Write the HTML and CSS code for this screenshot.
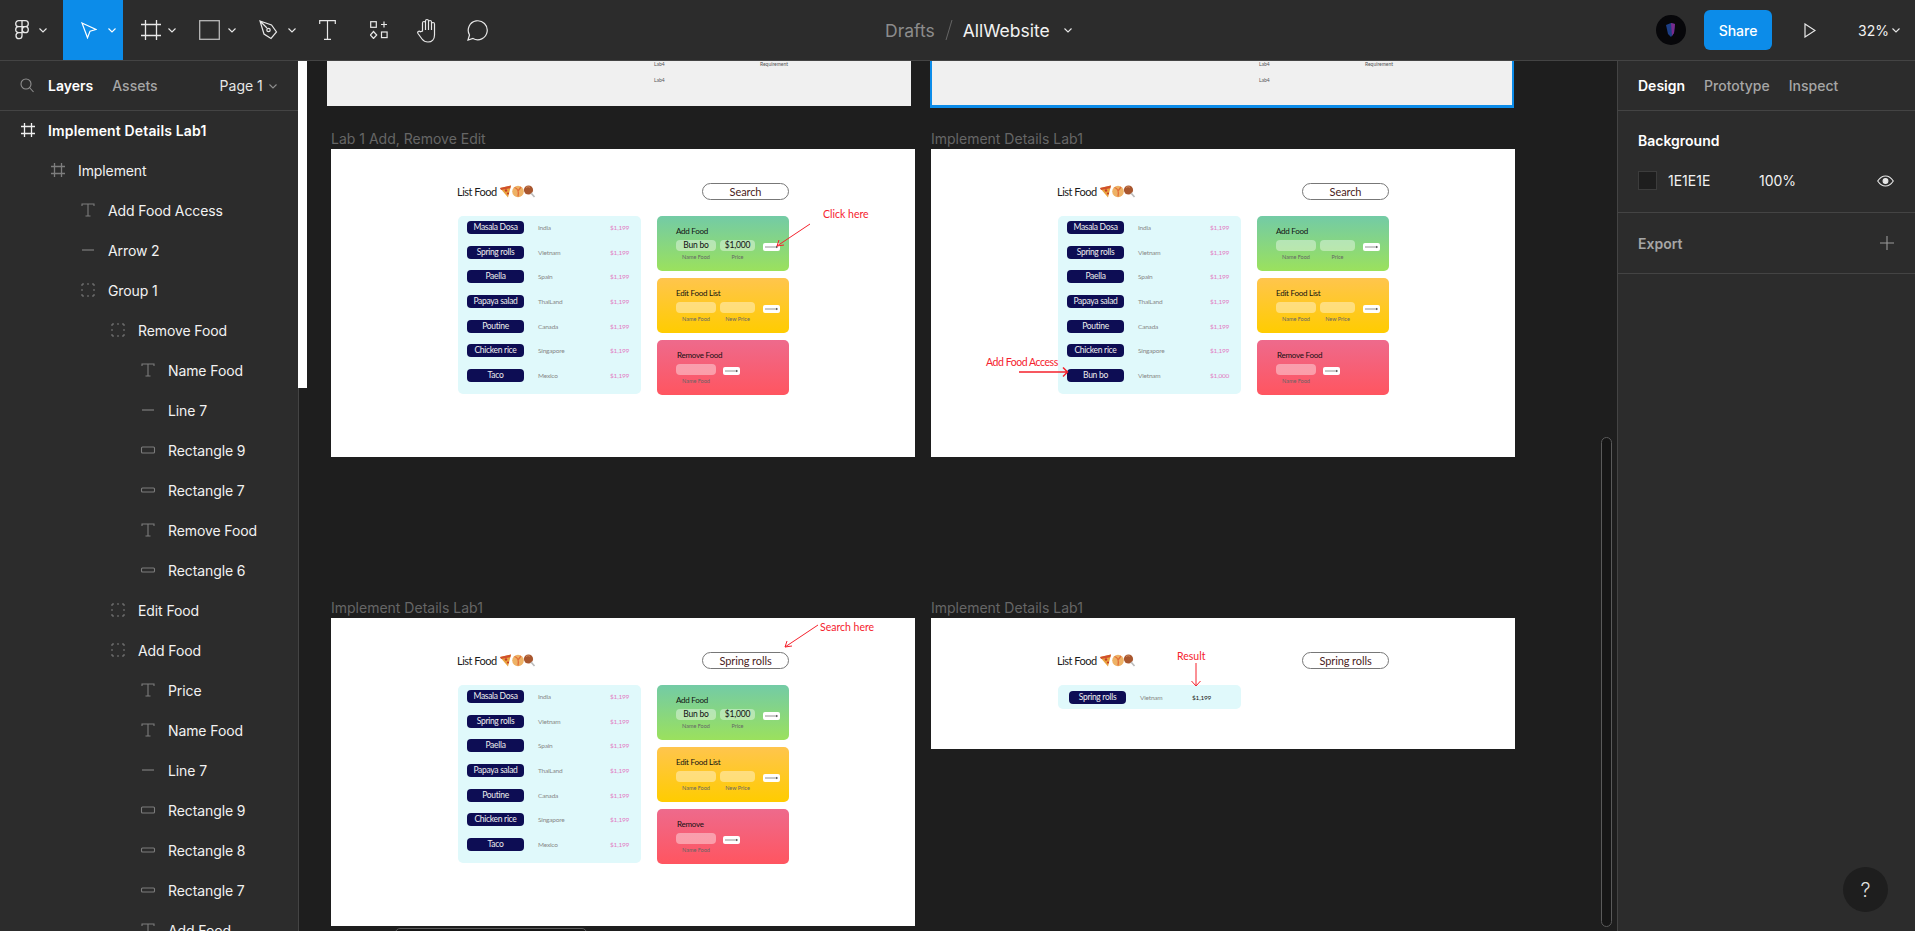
FILE: index.html
```html
<!DOCTYPE html>
<html lang="en">
  <head>
    <meta charset="UTF-8" />
    <title>AllWebsite - Figma</title>
    <link rel="stylesheet" href="styles.css">
  </head>
  <body>
    <svg class="iconDefs" width="0" height="0">
      <symbol id="iFrame" viewBox="0 0 16 16"><path d="M4.5 1v14M11.5 1v14M1 4.5h14M1 11.5h14" fill="none" stroke="currentColor" stroke-width="1.3"/></symbol>
      <symbol id="iText" viewBox="0 0 16 16"><path d="M2 4V2h12v2M8 2v12M5.5 14h5" fill="none" stroke="currentColor" stroke-width="1.1"/></symbol>
      <symbol id="iLine" viewBox="0 0 16 16"><path d="M2 8h12" stroke="currentColor" stroke-width="1.2"/></symbol>
      <symbol id="iGroup" viewBox="0 0 16 16"><path d="M2 2h2M7 2h2M12 2h2M2 14h2M7 14h2M12 14h2M2 2v2M2 7v2M2 12v2M14 2v2M14 7v2M14 12v2" fill="none" stroke="currentColor" stroke-width="1"/></symbol>
      <symbol id="iRect" viewBox="0 0 16 16"><rect x="1.5" y="5" width="13" height="6" rx="1" fill="none" stroke="currentColor" stroke-width="1.1"/></symbol>
      <symbol id="iRectThin" viewBox="0 0 16 16"><rect x="1.5" y="6" width="13" height="4" rx="1" fill="none" stroke="currentColor" stroke-width="1.1"/></symbol>
      <symbol id="iChevron" viewBox="0 0 10 10"><path d="M1.5 3.5 5 7l3.5-3.5" fill="none" stroke="currentColor" stroke-width="1.1"/></symbol>
      <symbol id="iGo" viewBox="0 0 17 8"><path d="M2 4h12.500" stroke="#777" stroke-width=".8"/><path d="M13 2.700 15 4l-2 1.300z" fill="#555"/></symbol>
      <symbol id="iFood" viewBox="0 0 36 13">
        <path d="M0 3 11 0.500 8 12.500z" fill="#e8a33c"/>
        <path d="M0 3 11 0.500 10.300 3.200 1 5z" fill="#d0502c"/>
        <circle cx="6" cy="5.500" r="1.200" fill="#c8392b"/>
        <circle cx="8" cy="8.500" r="1.100" fill="#c8392b"/>
        <circle cx="18" cy="6.500" r="5.800" fill="#eeb266"/>
        <path d="M14.500 2.500c3.500 1 4.500 4.500 3.500 9M21 2l-3 4" fill="none" stroke="#e2703a" stroke-width="1.300"/>
        <circle cx="28.500" cy="5" r="4.600" fill="#a8562e"/>
        <path d="M26 2.500c1.500-1 3-1 4 0" fill="none" stroke="#d28a5c"/>
        <path d="M31 8l3.500 4" stroke="#bbb" stroke-width="1.700"/>
      </symbol>
    </svg>

    <div class="topbar">
      <div class="tools">
        <div class="tool toolMain">
          <svg class="toolIcon" width="14" height="20" viewBox="0 0 14 20" fill="none" stroke="#e8e8e8" stroke-width="1.300"><path d="M7 .7H3.700a3 3 0 0 0 0 6H7zM7 .7h3.300a3 3 0 0 1 0 6H7zM7 6.700H3.700a3 3 0 0 0 0 6H7zM7 12.700H3.700A3 3 0 1 0 7 15.700zM13.300 9.700a3 3 0 1 1-6 0 3 3 0 0 1 6 0z"/></svg>
          <svg class="chev"><use href="#iChevron"/></svg>
        </div>
        <div class="tool toolMove">
          <svg class="toolIcon" width="16" height="17" viewBox="0 0 16 17" fill="none" stroke="#fff" stroke-width="1.200"><path d="M1 1l14 6.500-6 1.800-2.500 6.500z"/></svg>
          <svg class="chev"><use href="#iChevron"/></svg>
        </div>
        <div class="tool toolFrame">
          <svg class="toolIcon" width="20" height="20" viewBox="0 0 20 20" fill="none" stroke="#e8e8e8" stroke-width="1.300"><path d="M4.500 0v20M15.500 0v20M0 4.500h20M0 15.500h20"/></svg>
          <svg class="chev"><use href="#iChevron"/></svg>
        </div>
        <div class="tool toolRect">
          <svg class="toolIcon" width="21" height="20" viewBox="0 0 21 20" fill="none" stroke="#b8b8b8" stroke-width="1.300"><rect x=".7" y=".7" width="19.600" height="18.600"/></svg>
          <svg class="chev"><use href="#iChevron"/></svg>
        </div>
        <div class="tool toolPen">
          <svg class="toolIcon" width="20" height="20" viewBox="0 0 20 20" fill="none" stroke="#e8e8e8" stroke-width="1.200"><path d="M1 1l11.500 4 5 7-5.500 6.500-7-4.500zM1 1l7 7"/><circle cx="9.500" cy="10" r="1.700"/></svg>
          <svg class="chev"><use href="#iChevron"/></svg>
        </div>
        <svg class="toolSolo toolText" width="17" height="20" viewBox="0 0 17 20" fill="none" stroke="#e8e8e8" stroke-width="1.200"><path d="M.7 4V.7h15.600V4M8.500.7v18.600M5 19.300h7"/></svg>
        <svg class="toolSolo toolWidgets" width="18" height="18" viewBox="0 0 18 18" fill="none" stroke="#e8e8e8" stroke-width="1.200"><rect x=".7" y=".7" width="5.600" height="5.600"/><path d="M14 .5v6M11 3.500h6"/><path d="M3.500 10.500l3.200 3.500-3.200 3.500L.3 14z"/><rect x="11.500" y="11" width="5.600" height="5.600"/></svg>
        <svg class="toolSolo toolHand" width="22" height="25" viewBox="0 0 22 25" fill="none" stroke="#e8e8e8" stroke-width="1.200"><path d="M5.500 13V5a1.500 1.500 0 0 1 3 0V3a1.500 1.500 0 0 1 3 0v1a1.500 1.500 0 0 1 3 0v2a1.500 1.500 0 0 1 3 0v11c0 4-2.500 7-6.500 7-3 0-4.500-1-6-3L1 15.500c-1-1.500 1-3 2.300-1.800zM8.500 5v7M11.500 3v9M14.500 4v8"/></svg>
        <svg class="toolSolo toolComment" width="22" height="21" viewBox="0 0 22 21" fill="none" stroke="#e8e8e8" stroke-width="1.200"><path d="M1 20l1.500-5A9.500 9.500 0 1 1 6 18.500z"/></svg>
      </div>
      <div class="fileTitle">
        <span class="fileFolder">Drafts</span>
        <svg class="fileSlash" width="8" height="20" viewBox="0 0 8 20"><path d="M7 0 1 20" stroke="#666" stroke-width="1"/></svg>
        <span class="fileName">AllWebsite</span>
        <svg class="chev"><use href="#iChevron"/></svg>
      </div>
      <div class="topRight">
        <svg class="avatar" width="30" height="30" viewBox="0 0 30 30"><circle cx="15" cy="15" r="15" fill="#07070a"/><path d="M10 10l5-2 4 1-1 9-3 4-3-3z" fill="#1d3f86"/><path d="M15 8l4 1-1 9-2 3z" fill="#7a2a8c"/></svg>
        <div class="shareBtn">Share</div>
        <svg class="playIcon" width="12" height="15" viewBox="0 0 12 15" fill="none" stroke="#e8e8e8" stroke-width="1.200"><path d="M1 1l10 6.500L1 14z"/></svg>
        <span class="zoomValue">32%</span>
        <svg class="chev"><use href="#iChevron"/></svg>
      </div>
    </div>

    <div class="workspace">
      <div class="leftPanel">
        <div class="panelTabs">
          <svg class="searchIcon" width="14" height="15" viewBox="0 0 14 15" fill="none" stroke="#8f8f8f" stroke-width="1.100"><circle cx="6" cy="6" r="5"/><path d="M9.500 9.500 13.500 14"/></svg>
          <span class="tabOn">Layers</span>
          <span class="tabOff">Assets</span>
          <span class="pageName">Page 1</span>
          <svg class="chev chevDim"><use href="#iChevron"/></svg>
        </div>
        <div class="layerList">
          <div class="layer d0 layerTop"><svg class="layerIcon"><use href="#iFrame"/></svg>Implement Details Lab1</div>
          <div class="layer d1"><svg class="layerIcon iconDim"><use href="#iFrame"/></svg>Implement</div>
          <div class="layer d2"><svg class="layerIcon iconDim"><use href="#iText"/></svg>Add Food Access</div>
          <div class="layer d2"><svg class="layerIcon iconDim"><use href="#iLine"/></svg>Arrow 2</div>
          <div class="layer d2"><svg class="layerIcon iconDim"><use href="#iGroup"/></svg>Group 1</div>
          <div class="layer d3"><svg class="layerIcon iconDim"><use href="#iGroup"/></svg>Remove Food</div>
          <div class="layer d4"><svg class="layerIcon iconDim"><use href="#iText"/></svg>Name Food</div>
          <div class="layer d4"><svg class="layerIcon iconDim"><use href="#iLine"/></svg>Line 7</div>
          <div class="layer d4"><svg class="layerIcon iconDim"><use href="#iRect"/></svg>Rectangle 9</div>
          <div class="layer d4"><svg class="layerIcon iconDim"><use href="#iRectThin"/></svg>Rectangle 7</div>
          <div class="layer d4"><svg class="layerIcon iconDim"><use href="#iText"/></svg>Remove Food</div>
          <div class="layer d4"><svg class="layerIcon iconDim"><use href="#iRectThin"/></svg>Rectangle 6</div>
          <div class="layer d3"><svg class="layerIcon iconDim"><use href="#iGroup"/></svg>Edit Food</div>
          <div class="layer d3"><svg class="layerIcon iconDim"><use href="#iGroup"/></svg>Add Food</div>
          <div class="layer d4"><svg class="layerIcon iconDim"><use href="#iText"/></svg>Price</div>
          <div class="layer d4"><svg class="layerIcon iconDim"><use href="#iText"/></svg>Name Food</div>
          <div class="layer d4"><svg class="layerIcon iconDim"><use href="#iLine"/></svg>Line 7</div>
          <div class="layer d4"><svg class="layerIcon iconDim"><use href="#iRect"/></svg>Rectangle 9</div>
          <div class="layer d4"><svg class="layerIcon iconDim"><use href="#iRectThin"/></svg>Rectangle 8</div>
          <div class="layer d4"><svg class="layerIcon iconDim"><use href="#iRectThin"/></svg>Rectangle 7</div>
          <div class="layer d4"><svg class="layerIcon iconDim"><use href="#iText"/></svg>Add Food</div>
        </div>
      </div>

      <div class="canvas">
        <div class="whiteStrip"></div>

        <div class="frame frameTopA">
          <span class="tiny tinyA">Lab4</span><span class="tiny tinyB">Requirement</span><span class="tiny tinyC">Lab4</span>
        </div>
        <div class="frame frameTopB">
          <span class="tiny tinyA">Lab4</span><span class="tiny tinyB">Requirement</span><span class="tiny tinyC">Lab4</span>
        </div>

        <!-- Lab 1 add -->
        <div class="frame frameA">
          <span class="frameLabel">Lab 1 Add, Remove Edit</span>
          <div class="foodHeader">
            <div class="foodTitle">List Food <svg class="foodEmoji"><use href="#iFood"/></svg></div>
            <div class="foodSearch">Search</div>
          </div>
          <div class="foodBody">
            <div class="foodList">
              <div class="foodRow"><span class="foodName">Masala Dosa</span><span class="foodCountry">India</span><span class="foodPrice">$1,199</span></div>
              <div class="foodRow"><span class="foodName">Spring rolls</span><span class="foodCountry">Vietnam</span><span class="foodPrice">$1,199</span></div>
              <div class="foodRow"><span class="foodName">Paella</span><span class="foodCountry">Spain</span><span class="foodPrice">$1,199</span></div>
              <div class="foodRow"><span class="foodName">Papaya salad</span><span class="foodCountry">ThaiLand</span><span class="foodPrice">$1,199</span></div>
              <div class="foodRow"><span class="foodName">Poutine</span><span class="foodCountry">Canada</span><span class="foodPrice">$1,199</span></div>
              <div class="foodRow"><span class="foodName">Chicken rice</span><span class="foodCountry">Singapore</span><span class="foodPrice">$1,199</span></div>
              <div class="foodRow"><span class="foodName">Taco</span><span class="foodCountry">Mexico</span><span class="foodPrice">$1,199</span></div>
            </div>
            <div class="foodCards">
              <div class="foodCard cardAdd">
                <div class="cardTitle">Add Food</div>
                <div class="cardFields">
                  <div class="field fieldName"><div class="fieldBox">Bun bo</div><div class="fieldLabel">Name Food</div></div>
                  <div class="field fieldPrice"><div class="fieldBox">$1,000</div><div class="fieldLabel">Price</div></div>
                  <svg class="goBtn"><use href="#iGo"/></svg>
                </div>
              </div>
              <div class="foodCard cardEdit">
                <div class="cardTitle">Edit Food List</div>
                <div class="cardFields">
                  <div class="field fieldName"><div class="fieldBox"></div><div class="fieldLabel">Name Food</div></div>
                  <div class="field fieldPrice"><div class="fieldBox"></div><div class="fieldLabel">New Price</div></div>
                  <svg class="goBtn"><use href="#iGo"/></svg>
                </div>
              </div>
              <div class="foodCard cardRemove">
                <div class="cardTitle">Remove Food</div>
                <div class="cardFields">
                  <div class="field fieldName"><div class="fieldBox"></div><div class="fieldLabel">Name Food</div></div>
                  <svg class="goBtn goNear"><use href="#iGo"/></svg>
                </div>
              </div>
            </div>
          </div>
          <span class="note noteClick">Click here</span>
          <svg class="noteArrow arrowClick" width="40" height="28" viewBox="0 0 40 28" fill="none" stroke="#f5222d" stroke-width="1"><path d="M37 2 4 24M4 24l2-6M4 24l7-1"/></svg>
        </div>

        <!-- Lab 1 details, new row added -->
        <div class="frame frameB">
          <span class="frameLabel">Implement Details Lab1</span>
          <div class="foodHeader">
            <div class="foodTitle">List Food <svg class="foodEmoji"><use href="#iFood"/></svg></div>
            <div class="foodSearch">Search</div>
          </div>
          <div class="foodBody">
            <div class="foodList">
              <div class="foodRow"><span class="foodName">Masala Dosa</span><span class="foodCountry">India</span><span class="foodPrice">$1,199</span></div>
              <div class="foodRow"><span class="foodName">Spring rolls</span><span class="foodCountry">Vietnam</span><span class="foodPrice">$1,199</span></div>
              <div class="foodRow"><span class="foodName">Paella</span><span class="foodCountry">Spain</span><span class="foodPrice">$1,199</span></div>
              <div class="foodRow"><span class="foodName">Papaya salad</span><span class="foodCountry">ThaiLand</span><span class="foodPrice">$1,199</span></div>
              <div class="foodRow"><span class="foodName">Poutine</span><span class="foodCountry">Canada</span><span class="foodPrice">$1,199</span></div>
              <div class="foodRow"><span class="foodName">Chicken rice</span><span class="foodCountry">Singapore</span><span class="foodPrice">$1,199</span></div>
              <div class="foodRow"><span class="foodName">Bun bo</span><span class="foodCountry">Vietnam</span><span class="foodPrice">$1,000</span></div>
            </div>
            <div class="foodCards">
              <div class="foodCard cardAdd">
                <div class="cardTitle">Add Food</div>
                <div class="cardFields">
                  <div class="field fieldName"><div class="fieldBox"></div><div class="fieldLabel">Name Food</div></div>
                  <div class="field fieldPrice"><div class="fieldBox"></div><div class="fieldLabel">Price</div></div>
                  <svg class="goBtn"><use href="#iGo"/></svg>
                </div>
              </div>
              <div class="foodCard cardEdit">
                <div class="cardTitle">Edit Food List</div>
                <div class="cardFields">
                  <div class="field fieldName"><div class="fieldBox"></div><div class="fieldLabel">Name Food</div></div>
                  <div class="field fieldPrice"><div class="fieldBox"></div><div class="fieldLabel">New Price</div></div>
                  <svg class="goBtn"><use href="#iGo"/></svg>
                </div>
              </div>
              <div class="foodCard cardRemove">
                <div class="cardTitle">Remove Food</div>
                <div class="cardFields">
                  <div class="field fieldName"><div class="fieldBox"></div><div class="fieldLabel">Name Food</div></div>
                  <svg class="goBtn goNear"><use href="#iGo"/></svg>
                </div>
              </div>
            </div>
          </div>
          <span class="note noteAccess">Add Food Access</span>
          <svg class="noteArrow arrowAccess" width="50" height="12" viewBox="0 0 50 12" fill="none" stroke="#f5222d" stroke-width="1.500"><path d="M0 6h48M44 1.500 48.500 6 44 10.500"/></svg>
        </div>

        <!-- search -->
        <div class="frame frameC">
          <span class="frameLabel">Implement Details Lab1</span>
          <div class="foodHeader">
            <div class="foodTitle">List Food <svg class="foodEmoji"><use href="#iFood"/></svg></div>
            <div class="foodSearch">Spring rolls</div>
          </div>
          <div class="foodBody">
            <div class="foodList">
              <div class="foodRow"><span class="foodName">Masala Dosa</span><span class="foodCountry">India</span><span class="foodPrice">$1,199</span></div>
              <div class="foodRow"><span class="foodName">Spring rolls</span><span class="foodCountry">Vietnam</span><span class="foodPrice">$1,199</span></div>
              <div class="foodRow"><span class="foodName">Paella</span><span class="foodCountry">Spain</span><span class="foodPrice">$1,199</span></div>
              <div class="foodRow"><span class="foodName">Papaya salad</span><span class="foodCountry">ThaiLand</span><span class="foodPrice">$1,199</span></div>
              <div class="foodRow"><span class="foodName">Poutine</span><span class="foodCountry">Canada</span><span class="foodPrice">$1,199</span></div>
              <div class="foodRow"><span class="foodName">Chicken rice</span><span class="foodCountry">Singapore</span><span class="foodPrice">$1,199</span></div>
              <div class="foodRow"><span class="foodName">Taco</span><span class="foodCountry">Mexico</span><span class="foodPrice">$1,199</span></div>
            </div>
            <div class="foodCards">
              <div class="foodCard cardAdd">
                <div class="cardTitle">Add Food</div>
                <div class="cardFields">
                  <div class="field fieldName"><div class="fieldBox">Bun bo</div><div class="fieldLabel">Name Food</div></div>
                  <div class="field fieldPrice"><div class="fieldBox">$1,000</div><div class="fieldLabel">Price</div></div>
                  <svg class="goBtn"><use href="#iGo"/></svg>
                </div>
              </div>
              <div class="foodCard cardEdit">
                <div class="cardTitle">Edit Food List</div>
                <div class="cardFields">
                  <div class="field fieldName"><div class="fieldBox"></div><div class="fieldLabel">Name Food</div></div>
                  <div class="field fieldPrice"><div class="fieldBox"></div><div class="fieldLabel">New Price</div></div>
                  <svg class="goBtn"><use href="#iGo"/></svg>
                </div>
              </div>
              <div class="foodCard cardRemove">
                <div class="cardTitle">Remove</div>
                <div class="cardFields">
                  <div class="field fieldName"><div class="fieldBox"></div><div class="fieldLabel">Name Food</div></div>
                  <svg class="goBtn goNear"><use href="#iGo"/></svg>
                </div>
              </div>
            </div>
          </div>
          <span class="note noteSearch">Search here</span>
          <svg class="noteArrow arrowSearch" width="40" height="28" viewBox="0 0 40 28" fill="none" stroke="#f5222d" stroke-width="1"><path d="M37 2 4 24M4 24l2-6M4 24l7-1"/></svg>
        </div>

        <!-- search result -->
        <div class="frame frameD">
          <span class="frameLabel">Implement Details Lab1</span>
          <div class="foodHeader">
            <div class="foodTitle">List Food <svg class="foodEmoji"><use href="#iFood"/></svg></div>
            <div class="foodSearch">Spring rolls</div>
          </div>
          <div class="foodBody">
            <div class="foodList listResult">
              <div class="foodRow"><span class="foodName">Spring rolls</span><span class="foodCountry countryResult">Vietnam</span><span class="foodPrice priceResult">$1,199</span></div>
            </div>
          </div>
          <span class="note noteResult">Result</span>
          <svg class="noteArrow arrowResult" width="12" height="24" viewBox="0 0 12 24" fill="none" stroke="#f5222d" stroke-width="1"><path d="M6 0v22.500M1.500 18 6 23l4.500-5"/></svg>
        </div>

        <div class="scrollV"></div>
        <div class="scrollH"></div>
      </div>

      <div class="rightPanel">
        <div class="panelTabs rightTabs">
          <span class="tabOn">Design</span>
          <span class="tabOff">Prototype</span>
          <span class="tabOff">Inspect</span>
        </div>
        <div class="section sectionBg">
          <div class="sectionTitle">Background</div>
          <div class="bgRow">
            <span class="swatch"></span>
            <span class="bgHex">1E1E1E</span>
            <span class="bgOpacity">100%</span>
            <svg class="eyeIcon" width="17" height="12" viewBox="0 0 17 12" fill="none" stroke="#e8e8e8" stroke-width="1.100"><path d="M.7 6C3 2.500 5.500 1 8.500 1s5.500 1.500 7.800 5c-2.300 3.500-4.800 5-7.800 5S3 9.500.7 6z"/><circle cx="8.500" cy="6" r="2.400" fill="#e8e8e8"/></svg>
          </div>
        </div>
        <div class="section sectionExport">
          <span class="exportTitle">Export</span>
          <svg width="14" height="14" viewBox="0 0 14 14" stroke="#9a9a9a" stroke-width="1.100"><path d="M7 0v14M0 7h14"/></svg>
        </div>
      </div>
    </div>

    <div class="helpBtn">?</div>
  </body>
</html>
```

FILE: styles.css
```css
* {
  box-sizing: border-box;
}
body {
  margin: 0;
  height: 931px;
  overflow: hidden;
  background-color: #1e1e1e;
  color: #f2f2f2;
  font-family: Inter, "Liberation Sans", sans-serif;
  font-size: 14px;
}
.iconDefs {
  position: absolute;
}
.chev {
  width: 10px;
  height: 10px;
  color: #e8e8e8;
  flex: none;
}
.chevDim {
  color: #8f8f8f;
}

/* top bar */
.topbar {
  height: 61px;
  display: flex;
  align-items: center;
  justify-content: space-between;
  background-color: #2c2c2c;
  border-bottom: 1px solid #444;
  position: relative;
}
.tools {
  display: flex;
  align-items: center;
  height: 60px;
}
.tool {
  display: flex;
  align-items: center;
  height: 60px;
  width: 60px;
  flex: none;
}
.toolMain {
  width: 63px;
  padding-left: 15px;
  gap: 9px;
}
.toolMove {
  background-color: #0c8ce9;
  padding-left: 18px;
  gap: 10px;
}
.toolMove .chev {
  color: #fff;
}
.toolFrame {
  padding-left: 18px;
  gap: 6px;
}
.toolRect {
  padding-left: 16px;
  gap: 7px;
}
.toolPen {
  padding-left: 16px;
  gap: 8px;
}
.toolSolo {
  flex: none;
}
.toolText {
  margin-left: 16px;
}
.toolWidgets {
  margin-left: 34px;
}
.toolHand {
  margin-left: 29px;
}
.toolComment {
  margin-left: 28px;
}
.fileTitle {
  position: absolute;
  left: 885px;
  top: 0;
  height: 60px;
  display: flex;
  align-items: center;
  font-size: 17.500px;
}
.fileFolder {
  color: #8c8c8c;
}
.fileSlash {
  margin: 0 10px;
}
.fileName {
  margin-right: 13px;
}
.topRight {
  display: flex;
  align-items: center;
  padding-right: 14px;
}
.shareBtn {
  width: 68px;
  height: 40px;
  margin-left: 18px;
  display: flex;
  align-items: center;
  justify-content: center;
  background-color: #0c8ce9;
  border-radius: 6px;
  color: #fff;
  font-weight: 500;
}
.playIcon {
  margin-left: 32px;
}
.zoomValue {
  margin-left: 42px;
  margin-right: 2px;
}

.workspace {
  display: flex;
  height: 870px;
}

/* side panels */
.leftPanel,
.rightPanel {
  flex: none;
  background-color: #2c2c2c;
  overflow: hidden;
}
.leftPanel {
  width: 299px;
  border-right: 1px solid #444;
}
.rightPanel {
  width: 298px;
  border-left: 1px solid #444;
}
.panelTabs {
  height: 50px;
  display: flex;
  align-items: center;
  border-bottom: 1px solid #444;
  padding-left: 20px;
}
.searchIcon {
  margin-right: 14px;
}
.tabOn {
  font-weight: 600;
  color: #fff;
}
.tabOff {
  font-weight: 500;
  color: #a6a6a6;
  margin-left: 19px;
}
.pageName {
  margin-left: 62px;
  margin-right: 5px;
  color: #e6e6e6;
}
.layerList {
  margin-top: -1px;
}
.layer {
  height: 40px;
  display: flex;
  align-items: center;
  gap: 10px;
  white-space: nowrap;
  letter-spacing: -0.1px;
}
.layerTop {
  font-weight: 600;
  color: #fff;
  letter-spacing: 0.15px;
}
.layerIcon {
  width: 20px;
  height: 16px;
  flex: none;
  color: #f0f0f0;
}
.iconDim {
  color: #7d7d7d;
}
.d0 {
  padding-left: 18px;
}
.d1 {
  padding-left: 48px;
}
.d2 {
  padding-left: 78px;
}
.d3 {
  padding-left: 108px;
}
.d4 {
  padding-left: 138px;
}
.section {
  border-bottom: 1px solid #444;
  padding-left: 20px;
  padding-right: 21px;
}
.sectionBg {
  height: 102px;
  padding-top: 21px;
}
.sectionTitle {
  font-weight: 600;
  color: #fff;
}
.bgRow {
  display: flex;
  align-items: center;
  margin-top: 22px;
}
.swatch {
  width: 19px;
  height: 19px;
  background-color: #1e1e1e;
  border: 1px solid #3c3c3c;
}
.bgHex {
  margin-left: 11px;
  width: 91px;
}
.bgOpacity {
  flex: 1;
}
.sectionExport {
  height: 61px;
  display: flex;
  align-items: center;
  justify-content: space-between;
}
.exportTitle {
  font-weight: 600;
  color: #a6a6a6;
}

/* canvas, frames keep their place on it */
.canvas {
  flex: 1;
  position: relative;
}
.whiteStrip {
  position: absolute;
  left: -1px;
  top: 0;
  width: 9px;
  height: 327px;
  background-color: #fff;
}
.frame {
  position: absolute;
  background-color: #fff;
  padding: 34px 0 0 126px;
  width: 584px;
  color: #111;
  font-family: Lato, "Liberation Sans", sans-serif;
}
.frameTopA,
.frameTopB {
  background-color: #f0f0f0;
  top: -60px;
  height: 105px;
  clip-path: inset(60px 0 0 0);
}
.frameTopA {
  left: 28px;
}
.frameTopB {
  left: 631px;
  height: 107px;
  border: solid #0c8ce9;
  border-width: 0 2px 3px 2px;
}
.frameA,
.frameB,
.frameC {
  height: 308px;
}
.frameA,
.frameB {
  top: 88px;
}
.frameC,
.frameD {
  top: 557px;
}
.frameA,
.frameC {
  left: 32px;
}
.frameB,
.frameD {
  left: 632px;
}
.frameD {
  height: 131px;
}
.frameLabel {
  position: absolute;
  left: 0;
  bottom: 100%;
  margin-bottom: 2px;
  font-family: Inter, "Liberation Sans", sans-serif;
  font-size: 14px;
  color: #666;
  white-space: nowrap;
}
.tiny {
  position: absolute;
  font-size: 5px;
  color: #555;
}
.tinyA {
  left: 327px;
  top: 60px;
}
.tinyB {
  left: 433px;
  top: 60px;
}
.tinyC {
  left: 327px;
  top: 76px;
}

.foodHeader {
  display: flex;
  align-items: center;
  justify-content: space-between;
  width: 332px;
  height: 17px;
  margin-bottom: 16px;
}
.foodTitle {
  display: flex;
  align-items: center;
  gap: 3px;
  font-size: 11px;
  letter-spacing: -0.5px;
  color: #1a1a1a;
}
.foodEmoji {
  width: 36px;
  height: 13px;
}
.foodSearch {
  width: 87px;
  height: 17px;
  border: 1px solid #777;
  border-radius: 9px;
  text-align: center;
  font-size: 11px;
  line-height: 15px;
  letter-spacing: -0.1px;
  color: #4a1c1c;
}
.foodBody {
  display: flex;
  gap: 16px;
  padding-left: 1px;
}
.foodList {
  width: 183px;
  height: 178px;
  padding-top: 5px;
  padding-left: 9px;
  display: flex;
  flex-direction: column;
  gap: 11.7px;
  background-color: #e0f9fb;
  border-radius: 5px;
}
.foodRow {
  display: flex;
  align-items: center;
  height: 13px;
}
.foodName {
  width: 57px;
  height: 13px;
  margin-right: 14px;
  background-color: #0d0d54;
  border-radius: 4px;
  color: #eee;
  text-align: center;
  font-size: 8.500px;
  line-height: 13px;
  letter-spacing: -0.3px;
}
.foodCountry {
  width: 72px;
  color: #888;
  font-size: 6.500px;
  letter-spacing: -0.2px;
}
.foodPrice {
  color: #e27cc4;
  font-size: 6.500px;
  letter-spacing: -0.2px;
}
.foodCards {
  width: 132px;
  display: flex;
  flex-direction: column;
  gap: 7px;
}
.foodCard {
  height: 55px;
  padding: 10px 0 0 19px;
  border-radius: 5px;
}
.cardAdd {
  background: linear-gradient(#73cba6, #9be15d);
}
.cardEdit {
  background: linear-gradient(#ffc54d, #ffcc00);
}
.cardRemove {
  background: linear-gradient(#ee6a8c, #ff5560);
}
.cardTitle {
  height: 10px;
  line-height: 10px;
  font-size: 8px;
  letter-spacing: -0.25px;
}
.cardRemove .cardTitle {
  padding-left: 1px;
}
.cardFields {
  display: flex;
  margin-top: 4px;
  gap: 4px;
}
.fieldName {
  width: 40px;
}
.fieldPrice {
  width: 35px;
}
.fieldBox {
  height: 11px;
  border-radius: 4px;
  background-color: rgba(255, 255, 255, 0.4);
  text-align: center;
  font-size: 8.500px;
  line-height: 11px;
  letter-spacing: -0.2px;
}
.fieldLabel {
  margin-top: 3px;
  text-align: center;
  font-size: 5.500px;
  line-height: 6px;
  color: #666;
}
.goBtn {
  width: 17px;
  height: 8px;
  margin: 3px 0 0 4px;
  background-color: #fff;
  border-radius: 2px;
}
.goNear {
  margin-left: 3px;
}

/* search result frame */
.listResult {
  height: 24px;
  padding-top: 6px;
  padding-left: 11px;
}
.countryResult {
  width: 52px;
}
.priceResult {
  color: #222;
}

/* red annotations over the frames */
.note {
  position: absolute;
  color: #f5222d;
  font-size: 10.500px;
  line-height: 14px;
  white-space: nowrap;
}
.noteArrow {
  position: absolute;
}
.noteClick {
  left: 492px;
  top: 58px;
}
.arrowClick {
  left: 442px;
  top: 73px;
}
.noteAccess {
  left: 55px;
  top: 206px;
  letter-spacing: -0.45px;
}
.arrowAccess {
  left: 88px;
  top: 217px;
}
.noteSearch {
  left: 489px;
  top: 2px;
}
.arrowSearch {
  left: 450px;
  top: 5px;
}
.noteResult {
  left: 246px;
  top: 31px;
}
.arrowResult {
  left: 259px;
  top: 45px;
}

.scrollV {
  position: absolute;
  left: 1302px;
  top: 376px;
  width: 11px;
  height: 490px;
  background-color: #161616;
  border: 1px solid #5a5a5a;
  border-radius: 6px;
}
.scrollH {
  position: absolute;
  left: 96px;
  top: 867px;
  width: 192px;
  height: 10px;
  background-color: #161616;
  border: 1px solid #5a5a5a;
  border-radius: 5px;
}
.helpBtn {
  position: absolute;
  left: 1843px;
  top: 867px;
  width: 45px;
  height: 45px;
  border-radius: 50%;
  background-color: #1e1e1e;
  color: #ddd;
  display: flex;
  align-items: center;
  justify-content: center;
  font-size: 20px;
  font-weight: 300;
}
```
